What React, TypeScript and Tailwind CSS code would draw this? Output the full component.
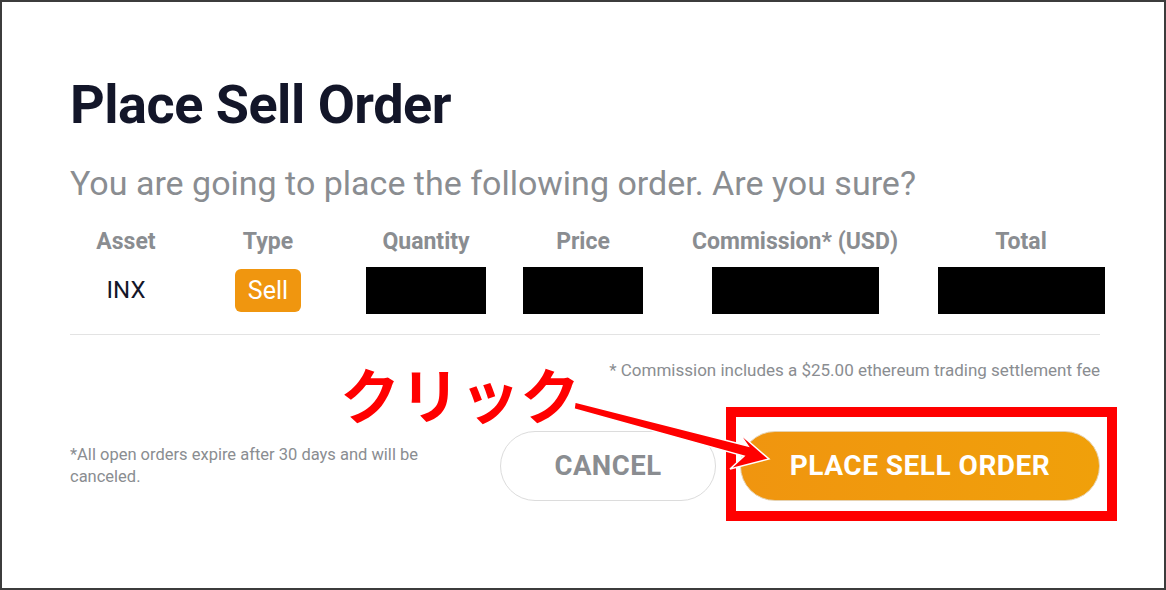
import { Fragment } from "react";

const columns = [
  { label: "Asset" },
  { label: "Type" },
  { label: "Quantity" },
  { label: "Price" },
  { label: "Commission* (USD)" },
  { label: "Total" },
];

function Redacted({ width }: { width: string }) {
  return <div className={`h-[47px] bg-black ${width}`} />;
}

export default function App() {
  return (
    <div
      className="relative h-[590px] w-[1166px] overflow-hidden border-2 border-[#3c3c3c] bg-white"
      style={{ fontFamily: "Roboto, 'Noto Sans', sans-serif" }}
    >
      <div className="flex flex-col pl-[68px] pr-[64px] pt-[72px]">
        <h1 className="text-[54px] font-bold leading-[62px] tracking-[-0.5px] text-[#131629]">
          Place Sell Order
        </h1>
        <p className="mt-[28px] text-[34px] leading-[38px] text-[#8a8d91]">
          You are going to place the following order. Are you sure?
        </p>

        {/* order summary */}
        <div className="mt-[22px] grid grid-cols-[112px_172px_144px_170px_254px_198px] items-center text-center">
          {columns.map((c) => (
            <div key={c.label} className="text-[23px] font-bold leading-[36px] text-[#8a8d91]">
              {c.label}
            </div>
          ))}
          <div className="mt-[7px] text-[24px] leading-[47px] text-[#131629]">INX</div>
          <div className="mt-[7px] flex justify-center">
            <span className="rounded-[6px] bg-[#f0960f] px-[13px] text-[25px] leading-[43px] text-white">Sell</span>
          </div>
          <div className="mt-[7px] flex justify-center"><Redacted width="w-[120px]" /></div>
          <div className="mt-[7px] flex justify-center"><Redacted width="w-[120px]" /></div>
          <div className="mt-[7px] flex justify-center"><Redacted width="w-[167px]" /></div>
          <div className="mt-[7px] flex justify-center"><Redacted width="w-[167px]" /></div>
        </div>

        <div className="mt-[20px] h-px bg-[#e3e3e3]" />

        <p className="mt-[25px] text-right text-[17px] leading-[20px] text-[#8a8d91]">
          * Commission includes a $25.00 ethereum trading settlement fee
        </p>

        <div className="mt-[51px] flex items-center">
          <p className="w-[390px] text-[16.5px] leading-[22px] text-[#8a8d91]">
            *All open orders expire after 30 days and will be canceled.
          </p>
          <div className="ml-auto flex items-center gap-[24px]">
            <button className="h-[70px] w-[216px] rounded-full border border-[#dcdcdc] bg-white text-[27.5px] font-bold tracking-[0.5px] text-[#8a8d91]">
              CANCEL
            </button>
            <button className="h-[70px] w-[360px] rounded-full border border-[#e6d2b0] bg-gradient-to-r from-[#f0950f] to-[#f0a00a] text-[28px] font-bold tracking-[0.5px] text-white">
              PLACE SELL ORDER
            </button>
          </div>
        </div>
      </div>

      {/* annotation overlay */}
      <div className="absolute left-[724px] top-[405px] h-[114px] w-[391px] border-[10px] border-[#ff0000]" />
      <div
        className="absolute left-[338px] top-[353px] text-[60px] font-bold leading-[76px] text-[#ff0000]"
        style={{ fontFamily: "'Noto Sans CJK JP', sans-serif" }}
      >
        クリック
      </div>
      <svg className="absolute left-0 top-0" width="1166" height="590" viewBox="0 0 1166 590">
        <path
          d="M573 400 L746 444 L737 431 L767 457 L728 467 L742 454 L572 407 Z"
          fill="#ff0000"
          stroke="#ffffff"
          strokeWidth="1.5"
          strokeLinejoin="miter"
        />
      </svg>
    </div>
  );
}
